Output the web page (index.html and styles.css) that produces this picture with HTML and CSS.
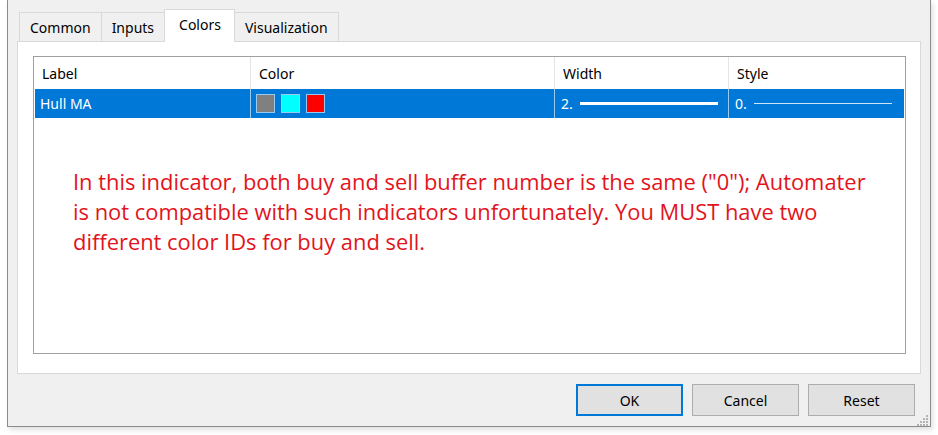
FILE: index.html
```html
<!DOCTYPE html>
<html>
<head>
<meta charset="utf-8">
<link rel="stylesheet" href="styles.css">
</head>
<body>
<div class="dialog">
  <div class="tabs">
    <div class="tab">Common</div>
    <div class="tab">Inputs</div>
    <div class="tab active">Colors</div>
    <div class="tab">Visualization</div>
  </div>
  <div class="panel">
    <div class="list">
      <div class="row head">
        <div class="cell c1">Label</div>
        <div class="cell c2">Color</div>
        <div class="cell c3">Width</div>
        <div class="cell c4">Style</div>
      </div>
      <div class="row sel">
        <div class="cell c1">Hull MA</div>
        <div class="cell c2">
          <span class="sw gray"></span><span class="sw cyan"></span><span class="sw red"></span>
        </div>
        <div class="cell c3"><span class="num">2.</span><span class="line thick"></span></div>
        <div class="cell c4"><span class="num">0.</span><span class="line thin"></span></div>
      </div>
      <p class="note">In this indicator, both buy and sell buffer number is the same ("0"); Automater<br>is not compatible with such indicators unfortunately. You MUST have two<br>different color IDs for buy and sell.</p>
    </div>
  </div>
  <div class="buttons">
    <button class="btn focus">OK</button>
    <button class="btn">Cancel</button>
    <button class="btn">Reset</button>
  </div>
  <div class="grip">
    <svg width="12" height="12" viewBox="0 0 12 12"><g fill="#b4b4b4"><rect x="9" y="0" width="2" height="2"/><rect x="6" y="3" width="2" height="2"/><rect x="9" y="3" width="2" height="2"/><rect x="3" y="6" width="2" height="2"/><rect x="6" y="6" width="2" height="2"/><rect x="9" y="6" width="2" height="2"/><rect x="0" y="9" width="2" height="2"/><rect x="3" y="9" width="2" height="2"/><rect x="6" y="9" width="2" height="2"/><rect x="9" y="9" width="2" height="2"/></g></svg>
  </div>
</div>
</body>
</html>
```
FILE: styles.css
```css
html, body {
  margin: 0;
  padding: 0;
  background: #ffffff;
  width: 938px;
  height: 435px;
  overflow: hidden;
}
.dialog {
  position: relative;
  margin-left: 7px;
  width: 924px;
  height: 427px;
  background: #f0f0f0;
  border: 1px solid #8c8c8c;
  border-top: none;
  box-shadow: 2px 3px 5px rgba(0,0,0,0.12);
  font-family: "Noto Sans", "Open Sans", sans-serif;
  font-size: 14px;
  color: #000;
  padding: 0 9px;
  box-sizing: border-box;
}
.tabs {
  display: flex;
  align-items: flex-end;
  height: 41px;
  padding-left: 2px;
}
.tab {
  height: 29px;
  box-sizing: border-box;
  border: 1px solid #d9d9d9;
  border-bottom: none;
  background: #f0f0f0;
  padding: 0 10px;
  display: flex;
  align-items: center;
  margin-left: -1px;
}
.tab:first-child { margin-left: 0; }
.tab.active {
  background: #ffffff;
  position: relative;
  z-index: 1;
  margin-bottom: -1px;
  height: 33px;
  padding: 0 13px 4px 14px;
}
.panel {
  height: 333px;
  box-sizing: border-box;
  background: #ffffff;
  border: 1px solid #d9d9d9;
  padding: 14px 14px 0 15px;
}
.list {
  height: 298px;
  box-sizing: border-box;
  border: 1px solid #a0a0a0;
  background: #fff;
}
.row {
  display: flex;
}
.row.head {
  height: 32px;
  align-items: center;
}
.cell {
  box-sizing: border-box;
  height: 100%;
  display: flex;
  align-items: center;
  padding-left: 8px;
  border-left: 1px solid #e5e5e5;
}
.cell.c1 { width: 216px; border-left: none; }
.cell.c2 { width: 304px; }
.cell.c3 { width: 174px; }
.cell.c4 { flex: 1; }
.row.sel {
  height: 29px;
  background: #0078d7;
  color: #ffffff;
  margin: 0 1px;
}
.row.sel .cell { border-left: 1px solid #99c9ef; }
.row.sel .cell.c1 { border-left: none; padding-left: 5px; width: 215px; }
.row.sel .cell.c2 { padding-left: 5px; }
.row.sel .cell.c3 { padding-left: 6px; }
.row.sel .cell.c4 { padding-left: 6px; }
.sw {
  width: 17px;
  height: 17px;
  border: 1px solid #99c9ef;
  margin-right: 6px;
}
.sw.gray { background: #808080; }
.sw.cyan { background: #00ffff; }
.sw.red { background: #ff0000; }
.num { width: 19px; }
.line { display: block; background: #ffffff; }
.line.thick { width: 138px; height: 3px; }
.line.thin { width: 138px; height: 1px; background: #cfe6f8; }
.note {
  margin: 49px 0 0 39px;
  white-space: nowrap;
  color: #e3131c;
  font-family: "Open Sans", sans-serif;
  font-size: 21.9px;
  line-height: 30px;
  letter-spacing: 0;
}
.buttons {
  display: flex;
  justify-content: flex-end;
  gap: 9px;
  margin-top: 10px;
  padding-right: 6px;
}
.btn {
  width: 107px;
  height: 32px;
  box-sizing: border-box;
  background: #e1e1e1;
  border: 1px solid #adadad;
  font-family: "Noto Sans", "Open Sans", sans-serif;
  font-size: 14px;
  color: #000;
  padding: 0;
}
.btn.focus {
  border: 2px solid #0078d7;
}
.grip {
  position: absolute;
  right: 1px;
  bottom: 2px;
  width: 12px;
  height: 12px;
}
```
